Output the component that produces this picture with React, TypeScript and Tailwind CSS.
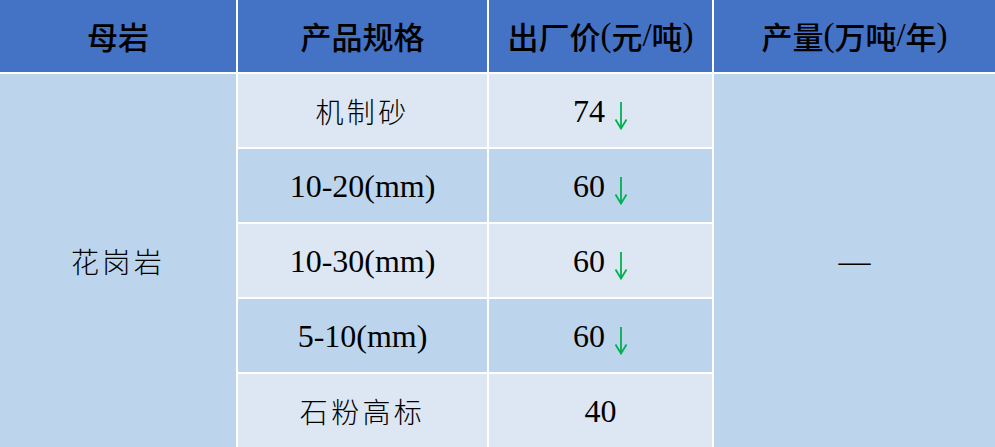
import React from 'react'

interface Row {
  spec: string
  price: string
  down: boolean
}

const rows: Row[] = [
  { spec: '机制砂', price: '74', down: true },
  { spec: '10-20(mm)', price: '60', down: true },
  { spec: '10-30(mm)', price: '60', down: true },
  { spec: '5-10(mm)', price: '60', down: true },
  { spec: '石粉高标', price: '40', down: false },
]

const headers = ['母岩', '产品规格', '出厂价(元/吨)', '产量(万吨/年)']

const isCjk = (s: string) => /[\u4e00-\u9fff]/.test(s[0])

const DownArrow = () => (
  <svg width="14" height="28" viewBox="0 0 14 28" className="ml-[9px] mt-[10px]" fill="none">
    <line x1="7" y1="0" x2="7" y2="26.5" stroke="#00B050" strokeWidth="1.8" />
    <polyline points="1.5,17.5 7,26.5 12.5,17.5" stroke="#00B050" strokeWidth="1.8" />
  </svg>
)

export default function App() {
  return (
    <div className="w-[995px] h-[447px] bg-white overflow-hidden">
      <div className="grid grid-cols-[236px_249px_223px_1fr] grid-rows-[72px_repeat(5,73px)] gap-[2px] bg-white h-full">
        {/* Header */}
        {headers.map((h) => (
          <div
            key={h}
            className="bg-[#4472C4] flex items-center justify-center text-black text-[31px] font-medium"
          >
            {h.split(/([()/])/).map((part, i) =>
              /[()/]/.test(part) ? (
                <span key={i} className="font-['Liberation_Serif',serif] font-normal text-[33px]">
                  {part}
                </span>
              ) : (
                <span key={i} className="font-['Noto_Sans_CJK_SC',sans-serif]">
                  {part}
                </span>
              )
            )}
          </div>
        ))}

        {/* Merged rock cell */}
        <div className="row-start-2 row-span-5 col-start-1 bg-[#BDD5EC] flex items-center justify-center text-[28px] tracking-[0.12em] font-light text-black font-['Noto_Sans_CJK_SC',sans-serif]">
          花岗岩
        </div>

        {rows.map((r, i) => {
          const bg = i % 2 === 0 ? 'bg-[#DDE7F3]' : 'bg-[#BDD5EC]'
          return (
            <React.Fragment key={r.spec}>
              <div
                className={`${bg} col-start-2 flex items-center justify-center text-black ${
                  isCjk(r.spec)
                    ? "text-[28px] tracking-[0.12em] font-light font-['Noto_Sans_CJK_SC',sans-serif]"
                    : "text-[32px] font-['Liberation_Serif',serif]"
                }`}
              >
                {r.spec}
              </div>
              <div className={`${bg} col-start-3 flex items-center justify-center text-black text-[32px] font-['Liberation_Serif',serif]`}>
                <span>{r.price}</span>
                {r.down && <DownArrow />}
              </div>
            </React.Fragment>
          )
        })}

        {/* Merged output cell */}
        <div className="row-start-2 row-span-5 col-start-4 bg-[#BDD5EC] flex items-center justify-center text-black text-[32px] font-['Liberation_Serif',serif]">
          —
        </div>
      </div>
    </div>
  )
}
